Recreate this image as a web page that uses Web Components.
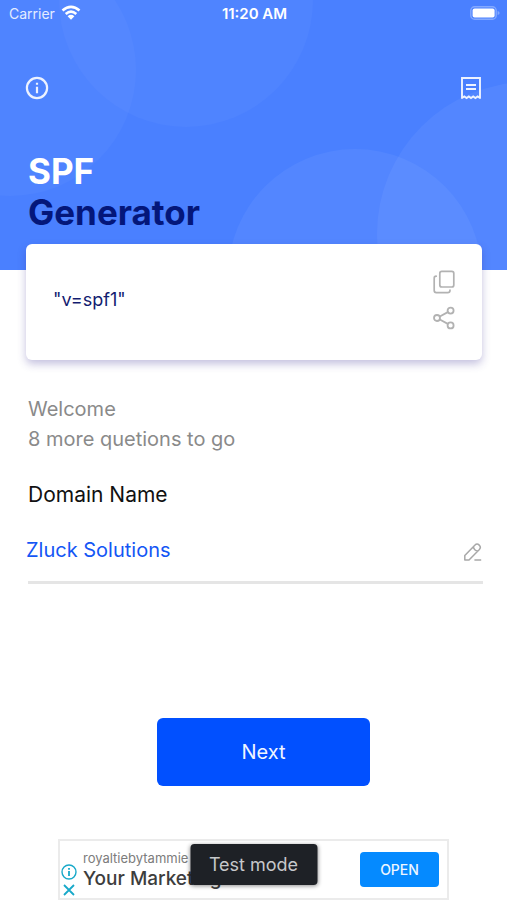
<!DOCTYPE html>
<html lang="en">
<head>
<meta charset="utf-8">
<meta name="viewport" content="width=device-width, initial-scale=1">
<title>SPF Generator</title>
<style>
html { background: #fff; }
body { margin: 0; font-family: Inter, "Liberation Sans", sans-serif; }
</style>
</head>
<body>
<spf-app></spf-app>
<script>
const define = (name, html, setup) => {
  const template = document.createElement('template');
  template.innerHTML = html;
  customElements.define(name, class extends HTMLElement {
    constructor() {
      super();
      this.attachShadow({ mode: 'open' }).append(template.content.cloneNode(true));
      if (setup) setup(this);
    }
  });
};

define('status-bar', `
<style>
:host { display: grid; grid-template-columns: 1fr auto 1fr; align-items: center; height: 28px; padding: 0 7px 0 9px; color: #fff; font-size: 14px; line-height: 20px; }
.left { display: flex; align-items: center; gap: 6px; color: #e4ecff; }
.left svg { margin-top: -2px; }
.time { font-size: 15px; font-weight: 600; }
.battery { justify-self: end; margin-top: -2px; }
svg { display: block; }
</style>
<div class="left"><span>Carrier</span>
<svg width="20" height="16" viewBox="0 0 20 16" fill="none" stroke="#fff" stroke-width="2.6"><path d="M1.5 5.6Q10-1.8 18.5 5.6M4.7 9Q10 4.4 15.3 9"/><path d="M6.6 11.2Q10 8.4 13.4 11.2L10 14.8Z" fill="#fff" stroke="none"/></svg></div>
<span class="time">11:20 AM</span>
<svg class="battery" width="30" height="14" viewBox="0 0 30 14"><rect x=".8" y=".8" width="25.4" height="12.4" rx="3.8" fill="none" stroke="#84a9ff" stroke-width="1.4"/><rect x="2.6" y="2.5" width="22" height="9" rx="2" fill="#fff"/><path d="M27.6 5v4q2-.6 2-2t-2-2" fill="#84a9ff"/></svg>`);

define('icon-button', `
<style>
:host { display: block; }
button { display: block; padding: 0; border: 0; background: none; color: inherit; cursor: pointer; }
::slotted(svg) { display: block; }
</style>
<button type="button"><slot></slot></button>`,
host => host.shadowRoot.querySelector('button').setAttribute('aria-label', host.getAttribute('label') || 'Action'));

define('app-hero', `
<style>
:host { display: block; position: relative; overflow: hidden; height: 270px; background: #4a80ff; }
.art { position: absolute; top: 0; height: 270px; }
.art.start { left: 0; }
.art.end { right: 0; }
.content { position: relative; }
nav { display: flex; justify-content: space-between; padding: 48px 25px 0; color: #edf2ff; }
h1 { margin: 0; padding: 51px 28px 0; font-size: 35px; line-height: 41px; font-weight: 700; color: #fff; }
h1 span { display: block; }
h1 .second { color: #04177a; }
</style>
<svg class="art start" width="320" viewBox="0 0 320 270" fill="#fff" fill-opacity=".03"><circle cx="186" cy="0" r="127"/><circle cx="10" cy="70" r="126"/></svg>
<svg class="art end" width="280" viewBox="227 0 280 270" fill="#fff" fill-opacity=".05"><circle cx="355" cy="276" r="127"/><circle cx="529" cy="234" r="152"/></svg>
<div class="content">
<status-bar></status-bar>
<nav>
<icon-button label="Information"><svg width="24" height="24" viewBox="0 0 24 24" fill="none" stroke="currentColor"><circle cx="12" cy="12" r="10.1" stroke-width="2.2"/><path d="M12 10.8v6.4M12 6.8v2" stroke-width="2.2"/></svg></icon-button>
<icon-button label="Records"><svg width="22" height="24" viewBox="0 0 22 24" fill="none" stroke="currentColor"><path d="M2 22.8V2h18v20.8M2 22l2.3-1.6L6.6 22l2.2-1.6L11 22l2.2-1.6 2.2 1.6 2.3-1.6L20 22" stroke-width="1.9"/><path d="M6 9h10M6 13h10" stroke-width="2"/></svg></icon-button>
</nav>
<h1><span>SPF</span><span class="second">Generator</span></h1>
</div>`);

define('record-card', `
<style>
:host { display: flex; align-items: center; justify-content: space-between; position: relative; min-height: 116px; margin: -26px 25px 0 26px; padding: 0 26px 4px 27px; box-sizing: border-box; border-radius: 6px; background: #fff; box-shadow: 0 4px 9px rgba(60, 50, 150, .3); color: #131c70; font-size: 18px; line-height: 30px; }
.actions { display: flex; flex-direction: column; gap: 12px; color: #b2b2b2; }
</style>
<slot></slot>
<div class="actions">
<icon-button label="Copy"><svg width="24" height="24" viewBox="0 0 24 24" fill="none" stroke="currentColor" stroke-width="1.7"><rect x="7.8" y="1.4" width="14" height="15.6" rx="2"/><path d="M4.2 6.2Q2.2 6.2 2.2 8.2V20.6Q2.2 22.6 4.2 22.6H15.6Q18 22.6 18 20.2" stroke-linecap="round"/></svg></icon-button>
<icon-button label="Share"><svg width="24" height="24" viewBox="0 0 24 24" fill="none" stroke="currentColor" stroke-width="1.8"><circle cx="5" cy="12" r="3"/><circle cx="18.6" cy="4.6" r="3"/><circle cx="18.6" cy="19.4" r="3"/><path d="M7.8 10.5l8-4.4M7.8 13.5l8 4.4"/></svg></icon-button>
</div>`);

define('question-form', `
<style>
:host { display: block; padding: 34px 24px 0 28px; font-size: 20px; line-height: 30px; }
p { margin: 0; color: #8a8a8a; }
label { display: block; margin-top: 26px; color: #111; font-size: 21px; }
.field { display: flex; align-items: center; gap: 8px; margin-top: 21px; padding-bottom: 12px; border-bottom: 3px solid #e5e5e5; color: #a8a8a8; }
.field icon-button { padding-top: 4px; }
input { flex: 1; min-width: 0; height: 38px; margin: 0 0 0 -2px; padding: 0; border: 0; outline: 0; background: none; color: #1456f5; font: inherit; }
.submit { display: flex; justify-content: center; margin-top: 134px; padding-left: 16px; }
.submit button { width: 213px; height: 68px; border: 0; border-radius: 6px; background: #0150ff; color: #f0f5ff; font: inherit; cursor: pointer; }
</style>
<p>Welcome</p>
<p>8 more quetions to go</p>
<label for="domain">Domain Name</label>
<div class="field"><input id="domain" type="text" value="Zluck Solutions">
<icon-button label="Edit domain name"><svg width="20" height="20" viewBox="0 0 20 20" fill="none" stroke="currentColor" stroke-width="1.5" stroke-linejoin="round"><path d="M1.8 18V13.6L11.8 3.2q2.2-2.2 4.4-.1t.2 4.4L6 18zM10.4 4.8q.6 3.6 4.4 4.2M11.4 18h6.8"/></svg></icon-button></div>
<div class="submit"><button type="button">Next</button></div>`);

define('ad-banner', `
<style>
:host { display: flex; align-items: center; position: relative; box-sizing: border-box; max-width: 391px; min-height: 61px; margin: 53px auto 0; padding: 0 8px 0 1px; border: 2px solid #ebebeb; background: #fff; }
.marks { display: flex; flex-direction: column; align-items: center; gap: 2px; align-self: flex-end; color: #18a9c9; }
.copy { flex: 1; min-width: 0; margin-left: 6px; white-space: nowrap; }
.site { color: #7c7c7c; font-size: 13px; line-height: 18px; }
.title { color: #3d3d3d; font-size: 19px; line-height: 24px; font-weight: 500; }
.open { display: block; width: 79px; padding: 0; border-radius: 4px; background: #058aff; color: #eef6ff; font-size: 14px; line-height: 35px; font-weight: 500; text-align: center; text-decoration: none; }
.toast { position: absolute; top: 3px; left: 50%; translate: -50% 0; box-sizing: border-box; width: 127px; border-radius: 4px; background: #1e2126; box-shadow: 0 1px 4px rgba(0, 0, 0, .45); color: #c6c8cb; font-size: 18px; line-height: 41px; text-align: center; white-space: nowrap; }
</style>
<div class="marks">
<icon-button label="About this ad"><svg width="16" height="16" viewBox="0 0 16 16" fill="none" stroke="currentColor" stroke-width="1.4"><circle cx="8" cy="8" r="7"/><path d="M8 7v5M8 4v1.8" stroke-width="1.8"/></svg></icon-button>
<icon-button label="Close ad"><svg width="16" height="16" viewBox="0 0 16 16" fill="none" stroke="currentColor" stroke-width="1.8"><path d="M3 3l10 10M13 3L3 13"/></svg></icon-button>
</div>
<div class="copy"><div class="site">royaltiebytammie</div><div class="title">Your Marketing</div></div>
<a class="open" href="#open">OPEN</a>
<div class="toast" role="status">Test mode</div>`);

define('spf-app', `
<style>:host { display: block; }</style>
<app-hero></app-hero>
<main>
<record-card>"v=spf1"</record-card>
<question-form></question-form>
</main>
<ad-banner></ad-banner>`);
</script>
</body>
</html>
